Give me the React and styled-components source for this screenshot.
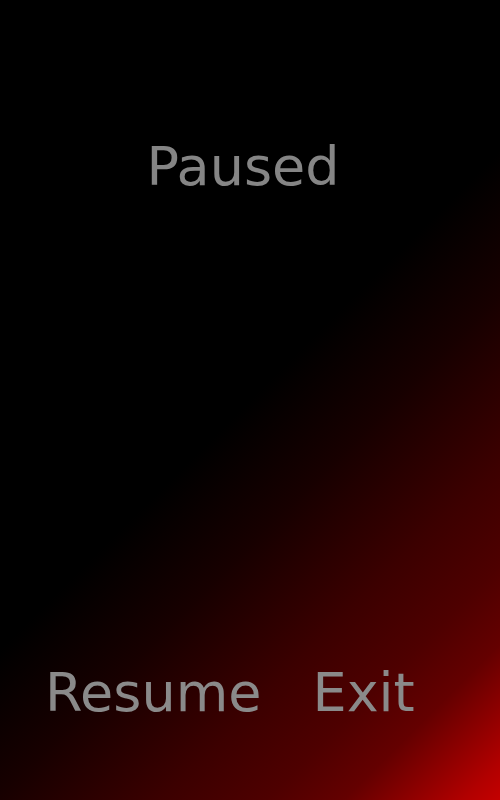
import styled, { createGlobalStyle } from "styled-components"

const GlobalStyle = createGlobalStyle`
html, body {
margin: 0;
padding: 0;
background: #000;
}
`
const Screen = styled.div`
width: 500px;
height: 800px;
display: flex;
flex-direction: column;
font-family: "DejaVu Sans", sans-serif;
background: linear-gradient(135deg, #000 0%, #000 50%, #170000 61%, #3c0000 74%, #4e0000 82%, #640000 88%, #b00000 97%, #c40000 100%);
overflow: hidden;
`
const Title = styled.h1`
margin: 0;
padding: 140px 14px 0 0;
text-align: center;
font-size: 54px;
font-weight: normal;
line-height: 54px;
color: #858585;
`
const Menu = styled.div`
margin-top: auto;
display: flex;
gap: 51px;
padding: 0 0 80px 45px;
`
const MenuButton = styled.button`
background: none;
border: none;
padding: 0;
font-family: inherit;
font-size: 54px;
line-height: 54px;
color: #8a8a8a;
cursor: pointer;
`

export default function App() {
    return (
        <Screen>
            <GlobalStyle/>
            <Title>Paused</Title>
            <Menu>
                <MenuButton>Resume</MenuButton>
                <MenuButton>Exit</MenuButton>
            </Menu>
        </Screen>
    )
}
